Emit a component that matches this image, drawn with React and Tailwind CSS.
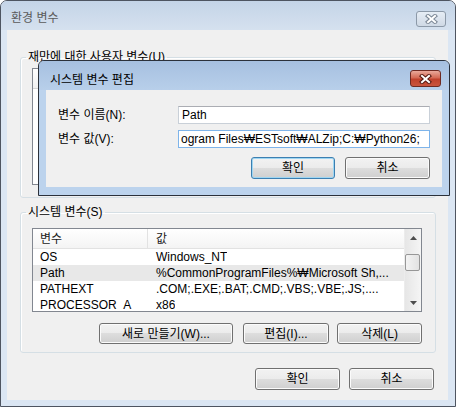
import React from "react";

function Btn({ children, className = "", primary = false }) {
  return (
    <div
      className={`flex items-center justify-center rounded-[3px] border text-[12px] leading-[14px] text-black bg-[linear-gradient(#f2f2f2_0%,#ebebeb_50%,#dddddd_50%,#cfcfcf_100%)] ${
        primary
          ? "border-[#3c7fb1] shadow-[inset_0_0_0_1px_#9fd6f2]"
          : "border-[#707070] shadow-[inset_0_0_0_1px_#fbfbfb]"
      } ${className}`}
    >
      {children}
    </div>
  );
}

function CloseX({ outline }) {
  const d = "M3 2 L10 8 M10 2 L3 8";
  return (
    <svg width="13" height="10" viewBox="0 0 13 10">
      <path d={d} stroke={outline} strokeWidth="4.2" strokeLinecap="square" fill="none" />
      <path d={d} stroke="#ffffff" strokeWidth="2" strokeLinecap="square" fill="none" />
    </svg>
  );
}

function Row({ a, b, hl }) {
  return (
    <div className={`flex h-[16px] items-center whitespace-nowrap ${hl ? "bg-[#e8e8e8]" : ""}`}>
      <div className="w-[115px] pl-[7px] overflow-hidden">{a}</div>
      <div className="pl-[8px] overflow-hidden">{b}</div>
    </div>
  );
}

export default function App() {
  return (
    <div className="relative w-[456px] h-[407px] bg-white overflow-hidden font-['Liberation_Sans','Noto_Sans_CJK_KR',sans-serif] text-[12px] text-black">
      {/* Outer window */}
      <div className="absolute inset-0 flex flex-col rounded-t-[7px] border border-[#4e5561] bg-[#dbe6f3] overflow-hidden">
        <div className="h-[29px] flex items-start justify-between bg-[linear-gradient(#c4d4e7,#d5e1ef)] pl-[10px] pr-[9px]">
          <div className="pt-[10px] leading-[14px] text-[#5a5a5a]">환경 변수</div>
          <div className="mt-[10px] w-[30px] h-[16px] rounded-[3px] border border-[#8c99a8] bg-[linear-gradient(#e6edf5,#cfd9e5)] flex items-center justify-center">
            <CloseX outline="#7f8b99" />
          </div>
        </div>
        <div className="flex pl-[6px]">
          <div className="w-[441px] h-[370px] bg-[#f0f0f0] flex flex-col pt-[20px] pl-[13px]">
            {/* User variables */}
            <fieldset className="w-[416px] h-[148px] border border-[#d5dfe5] rounded-[3px] shadow-[inset_1px_1px_0_#ffffff]">
              <legend className="ml-[5px] px-[2px] leading-[14px]">재만에 대한 사용자 변수(U)</legend>
              <div className="ml-[11px] mt-[4px] w-[390px] h-[117px] border border-[#828790] bg-white flex flex-col">
                <div className="h-[20px] border-b border-[#d5d5d5] bg-[linear-gradient(#ffffff,#f1f1f1)]"></div>
              </div>
            </fieldset>

            {/* System variables */}
            <fieldset className="mt-[7px] w-[416px] h-[148px] border border-[#d5dfe5] rounded-[3px] shadow-[inset_1px_1px_0_#ffffff]">
              <legend className="ml-[5px] px-[2px] leading-[14px]">시스템 변수(S)</legend>
              <div className="ml-[11px] mt-[9px] w-[390px] h-[84px] border border-[#828790] bg-white flex overflow-hidden">
                <div className="flex-1 flex flex-col overflow-hidden">
                  <div className="h-[20px] shrink-0 flex border-b border-[#e2e2e2] bg-[linear-gradient(#ffffff,#f4f4f4)] text-[#1a1a1a]">
                    <div className="w-[115px] pl-[7px] flex items-center border-r border-[#e2e2e2]">변수</div>
                    <div className="pl-[8px] flex items-center">값</div>
                  </div>
                  <Row a="OS" b="Windows_NT" />
                  <Row a="Path" b="%CommonProgramFiles%₩Microsoft Sh,..." hl />
                  <Row a="PATHEXT" b=".COM;.EXE;.BAT;.CMD;.VBS;.VBE;.JS;...." />
                  <Row a="PROCESSOR_A" b="x86" />
                </div>
                <div className="w-[17px] shrink-0 flex flex-col bg-[linear-gradient(90deg,#e6e6e6,#f5f5f5)] border-l border-[#ececec]">
                  <div className="h-[17px] flex items-center justify-center">
                    <svg width="7" height="4" viewBox="0 0 7 4"><path d="M0 4 L3.5 0 L7 4 Z" fill="#4d4d4d" /></svg>
                  </div>
                  <div className="mt-[8px] ml-[0px] w-[15px] h-[17px] rounded-[2px] border border-[#979797] bg-[linear-gradient(90deg,#f3f3f3,#e2e2e2)]"></div>
                  <div className="flex-1"></div>
                  <div className="h-[17px] flex items-center justify-center">
                    <svg width="7" height="4" viewBox="0 0 7 4"><path d="M0 0 L3.5 4 L7 0 Z" fill="#4d4d4d" /></svg>
                  </div>
                </div>
              </div>
              <div className="ml-[11px] mt-[11px] w-[390px] flex justify-end">
                <Btn className="w-[134px] h-[21px]">새로 만들기(W)...</Btn>
                <Btn className="ml-[10px] w-[86px] h-[21px]">편집(I)...</Btn>
                <Btn className="ml-[8px] w-[85px] h-[21px]">삭제(L)</Btn>
              </div>
            </fieldset>

            <div className="mt-[15px] mr-[14px] flex justify-end gap-[9px]">
              <Btn className="w-[85px] h-[22px]">확인</Btn>
              <Btn className="w-[85px] h-[22px]">취소</Btn>
            </div>
          </div>
        </div>
      </div>

      {/* Edit system variable dialog */}
      <div className="absolute left-[38px] top-[60px] w-[412px] h-[136px] flex flex-col rounded-t-[6px] border border-[#2b313b] bg-[#bcd3ed] overflow-hidden">
        <div className="h-[29px] shrink-0 flex items-start justify-between bg-[linear-gradient(#a6c0e0,#b8cfea)] pl-[11px] pr-[8px]">
          <div className="pt-[12px] leading-[14px]">시스템 변수 편집</div>
          <div className="mt-[9px] w-[31px] h-[17px] rounded-[3px] border border-[#6e2a22] bg-[linear-gradient(#e9a99b,#d46a55_45%,#c0412c_55%,#c9553e)] flex items-center justify-center">
            <CloseX outline="#5a1d15" />
          </div>
        </div>
        <div className="flex pl-[7px]">
          <div className="w-[396px] h-[97px] bg-[#f0f0f0] flex flex-col pt-[16px] pl-[12px] pr-[12px]">
            <div className="flex items-center h-[18px]">
              <div className="w-[120px] leading-[14px]">변수 이름(N):</div>
              <div className="w-[252px] h-[18px] border border-[#c9d0d8] border-t-[#abadb3] bg-white pl-[3px] flex items-center leading-[14px]">Path</div>
            </div>
            <div className="mt-[6px] flex items-center h-[18px]">
              <div className="w-[120px] leading-[14px]">변수 값(V):</div>
              <div className="w-[252px] h-[18px] border border-[#7eb4ea] bg-white pl-[2px] flex items-center leading-[14px] whitespace-nowrap overflow-hidden">ogram Files₩ESTsoft₩ALZip;C:₩Python26;</div>
            </div>
            <div className="mt-[9px] flex justify-end gap-[10px]">
              <Btn primary className="w-[84px] h-[22px]">확인</Btn>
              <Btn className="w-[85px] h-[22px]">취소</Btn>
            </div>
          </div>
        </div>
      </div>
    </div>
  );
}
